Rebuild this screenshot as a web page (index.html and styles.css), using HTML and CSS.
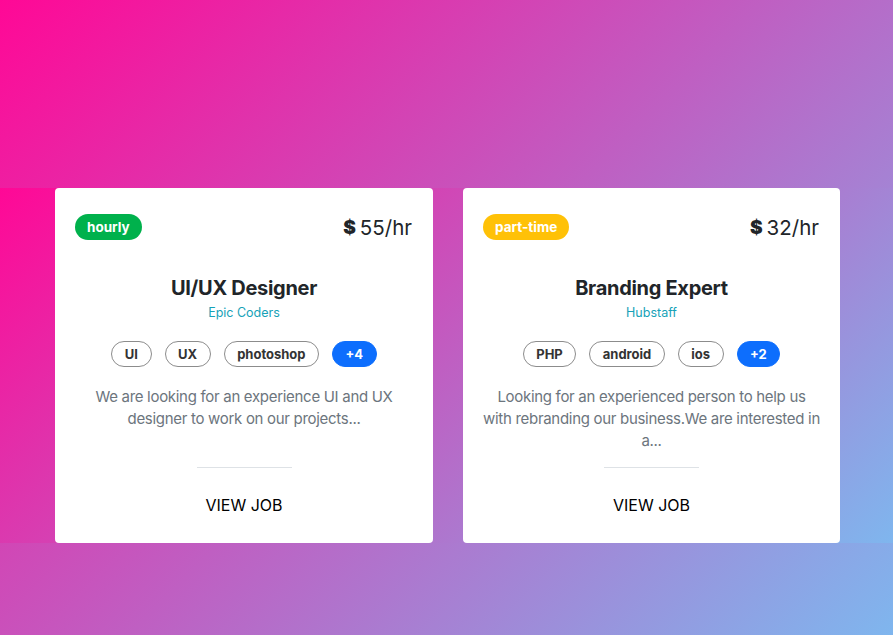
FILE: index.html
```html
<!DOCTYPE html>
<html lang="en">
<head>
<meta charset="utf-8">
<title>Jobs</title>
<link rel="stylesheet" href="styles.css">
</head>
<body>
<main class="page">
  <section class="jobs">
    <article class="card">
      <div class="card-head">
        <span class="badge badge-green">hourly</span>
        <span class="price"><span class="dollar">$</span>55/hr</span>
      </div>
      <h2 class="title">UI/UX Designer</h2>
      <div class="company">Epic Coders</div>
      <div class="tags">
        <span class="tag">UI</span>
        <span class="tag">UX</span>
        <span class="tag">photoshop</span>
        <span class="tag tag-more">+4</span>
      </div>
      <p class="desc">We are looking for an experience UI and UX designer to work on our projects...</p>
      <hr class="divider">
      <a class="view" href="#">VIEW JOB</a>
    </article>
    <article class="card">
      <div class="card-head">
        <span class="badge badge-yellow">part-time</span>
        <span class="price"><span class="dollar">$</span>32/hr</span>
      </div>
      <h2 class="title">Branding Expert</h2>
      <div class="company">Hubstaff</div>
      <div class="tags">
        <span class="tag">PHP</span>
        <span class="tag">android</span>
        <span class="tag">ios</span>
        <span class="tag tag-more">+2</span>
      </div>
      <p class="desc">Looking for an experienced person to help us with rebranding our business.We are interested in a...</p>
      <hr class="divider">
      <a class="view" href="#">VIEW JOB</a>
    </article>
  </section>
</main>
</body>
</html>
```
FILE: styles.css
```css
* { box-sizing: border-box; }
html, body { margin: 0; padding: 0; }
body {
  min-height: 100vh;
  font-family: "Inter", "Noto Sans", "Liberation Sans", sans-serif;
  background: linear-gradient(135deg, #ff0896 0%, #7fb6ee 100%);
  color: #212529;
}
.page {
  padding-top: 188px;
}
.jobs {
  display: grid;
  grid-template-columns: 378px 377px;
  gap: 30px;
  padding-left: 55px;
  background: linear-gradient(135deg, #ff0896 0%, #7fb6ee 100%);
}
.card {
  background: #fff;
  border-radius: 4px;
  padding: 24px 20px 28px;
  display: flex;
  flex-direction: column;
  align-items: center;
  text-align: center;
}
.card-head {
  width: 100%;
  height: 30px;
  display: flex;
  justify-content: space-between;
  align-items: center;
}
.badge {
  display: inline-block;
  height: 26px;
  line-height: 26px;
  padding: 0 12px;
  border-radius: 13px;
  color: #fff;
  font-size: 13.5px;
  font-weight: 700;
}
.badge-green { background: #00b14c; }
.badge-yellow { background: #ffc107; }
.price {
  font-size: 20.5px;
  color: #212529;
  display: flex;
  align-items: center;
  padding-right: 1px;
}
.dollar {
  font-weight: 900;
  font-size: 19px;
  margin-right: 4px;
}
.title {
  margin: 34px 0 0;
  font-size: 20px;
  line-height: 24px;
  font-weight: 700;
  letter-spacing: -0.3px;
  color: #212529;
}
.company {
  margin-top: 4px;
  font-size: 12.5px;
  line-height: 18px;
  color: #17a2b8;
}
.tags {
  margin-top: 19px;
  display: flex;
  gap: 13px;
  justify-content: center;
}
.tag {
  height: 26px;
  line-height: 24px;
  padding: 0 12.5px;
  border: 1px solid #8c8c8c;
  border-radius: 13px;
  font-size: 13px;
  font-weight: 700;
  color: #333;
}
.tag-more {
  background: #0d6efd;
  border-color: #0d6efd;
  color: #fff;
}
.desc {
  margin: 19px 0 0;
  min-height: 66px;
  font-size: 15px;
  line-height: 22px;
  letter-spacing: -0.3px;
  color: #6c757d;
}
.divider {
  margin: 15px 0 0;
  width: 95px;
  border: 0;
  border-top: 1px solid #dee2e6;
  height: 0;
}
.view {
  margin-top: 27px;
  font-size: 16px;
  line-height: 20px;
  color: #000;
  text-decoration: none;
}
```
